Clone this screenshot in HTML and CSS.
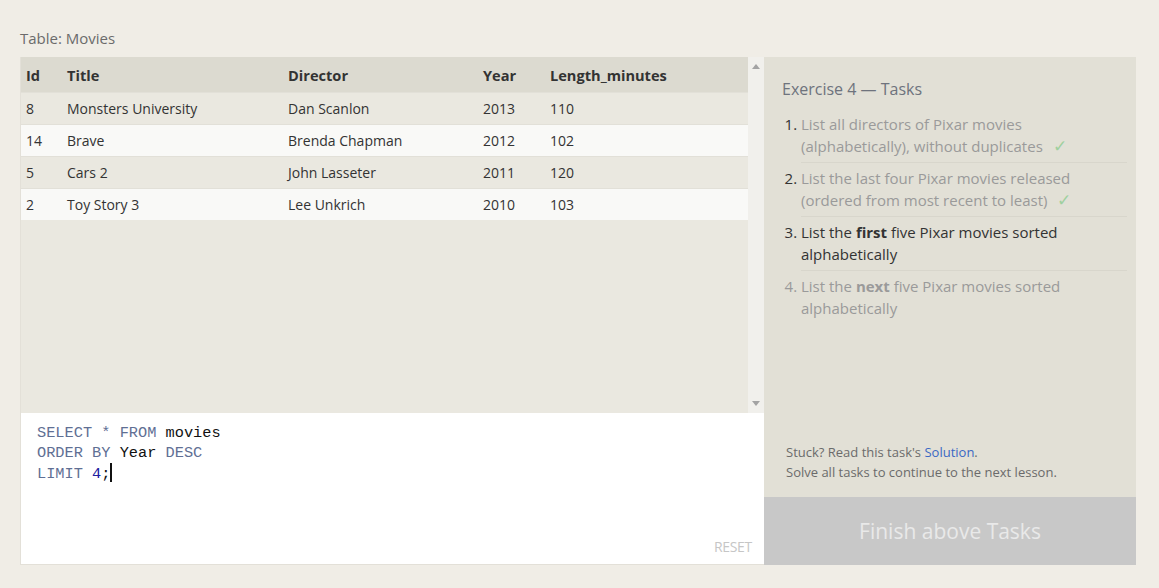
FILE: index.html
```html
<!DOCTYPE html>
<html>
<head>
<meta charset="utf-8">
<link rel="stylesheet" href="styles.css">
</head>
<body>
<div class="page">
  <div class="label">Table: Movies</div>
  <div class="frame">
    <div class="left">
      <div class="table-area">
        <div class="table-wrap">
          <table class="grid">
            <thead>
              <tr><th class="c-id">Id</th><th class="c-title">Title</th><th class="c-dir">Director</th><th class="c-year">Year</th><th class="c-len">Length_minutes</th></tr>
            </thead>
            <tbody>
              <tr class="odd"><td>8</td><td>Monsters University</td><td>Dan Scanlon</td><td>2013</td><td>110</td></tr>
              <tr class="even"><td>14</td><td>Brave</td><td>Brenda Chapman</td><td>2012</td><td>102</td></tr>
              <tr class="odd"><td>5</td><td>Cars 2</td><td>John Lasseter</td><td>2011</td><td>120</td></tr>
              <tr class="even"><td>2</td><td>Toy Story 3</td><td>Lee Unkrich</td><td>2010</td><td>103</td></tr>
            </tbody>
          </table>
        </div>
        <div class="scrollbar">
          <svg class="arrow" width="8" height="5" viewBox="0 0 8 5"><polygon points="4,0 8,5 0,5" fill="#a3a3a3"/></svg>
          <svg class="arrow" width="8" height="5" viewBox="0 0 8 5"><polygon points="0,0 8,0 4,5" fill="#a3a3a3"/></svg>
        </div>
      </div>
      <div class="editor">
        <div class="code">
          <div><span class="kw">SELECT</span> <span class="kw">*</span> <span class="kw">FROM</span> movies</div>
          <div><span class="kw">ORDER</span> <span class="kw">BY</span> Year <span class="kw">DESC</span></div>
          <div><span class="kw">LIMIT</span> <span class="num">4</span>;<span class="cursor"></span></div>
        </div>
        <div class="reset">RESET</div>
      </div>
    </div>
    <div class="right">
      <div class="tasks">
        <div class="ex-title">Exercise 4 — Tasks</div>
        <ol class="task-list">
          <li class="done">List all directors of Pixar movies (alphabetically), without duplicates <span class="check">✓</span></li>
          <li class="done">List the last four Pixar movies released (ordered from most recent to least) <span class="check">✓</span></li>
          <li class="active">List the <b>first</b> five Pixar movies sorted alphabetically</li>
          <li class="todo">List the <b>next</b> five Pixar movies sorted alphabetically</li>
        </ol>
      </div>
      <div class="help">
        <div>Stuck? Read this task's <a class="sol">Solution</a>.</div>
        <div>Solve all tasks to continue to the next lesson.</div>
      </div>
      <div class="finish">Finish above Tasks</div>
    </div>
  </div>
</div>
</body>
</html>
```

FILE: styles.css
```css
html, body {
  margin: 0;
  padding: 0;
  background: #f0ede6;
  font-family: "Open Sans", "Liberation Sans", sans-serif;
  color: #333;
}
.page {
  padding: 28px 0 0 20px;
}
.label {
  font-size: 15px;
  color: #6b6b6b;
  line-height: 21px;
  height: 21px;
  margin-bottom: 8px;
}
.frame {
  display: flex;
  width: 1116px;
  height: 508px;
}
.left {
  width: 744px;
  display: flex;
  flex-direction: column;
  border-left: 1px solid #e3e0d8;
  box-sizing: border-box;
}
.table-area {
  height: 356px;
  display: flex;
  background: #eae8e0;
}
.table-wrap {
  flex: 1;
}
.grid {
  width: 100%;
  border-collapse: collapse;
  font-size: 14px;
}
.grid th {
  background: #dcdad0;
  text-align: left;
  font-weight: 700;
  font-size: 14.6px;
  color: #333;
  height: 35px;
  padding: 1px 0 0 5px;
  box-sizing: border-box;
}
.grid td {
  height: 31px;
  padding: 0 0 0 5px;
  border-top: 1px solid #e2e0d8;
  color: #333;
}
.c-id { width: 41px; }
.c-title { width: 221px; }
.c-dir { width: 195px; }
.c-year { width: 67px; }
.odd td { background: #eae8e0; }
.even td { background: #f9f9f7; }
.scrollbar {
  width: 16px;
  background: #f1f0ec;
  display: flex;
  flex-direction: column;
  justify-content: space-between;
  align-items: center;
  padding: 7px 0 7px 0;
  box-sizing: border-box;
}
.editor {
  flex: 1;
  background: #fff;
  display: flex;
  flex-direction: column;
  padding: 10px 12px 8px 16px;
  border-bottom: 1px solid #e3e0d8;
}
.code {
  font-family: "Liberation Mono", "DejaVu Sans Mono", monospace;
  font-size: 15.3px;
  line-height: 20px;
  color: #111;
}
.kw { color: #5f6f94; }
.num { color: #2020a0; }
.cursor {
  display: inline-block;
  width: 2px;
  height: 19px;
  background: #111;
  vertical-align: -4px;
}
.reset {
  margin-top: auto;
  align-self: flex-end;
  font-size: 14px;
  color: #c6c6c6;
  letter-spacing: -0.3px;
}
.right {
  width: 372px;
  background: #e2e0d6;
  display: flex;
  flex-direction: column;
}
.tasks {
  padding: 20px 9px 0 18px;
  flex: 1;
}
.ex-title {
  font-size: 16px;
  color: #6e737d;
  line-height: 24px;
  margin-bottom: 12px;
}
.task-list {
  margin: 0;
  padding: 0 0 0 19px;
  font-size: 15px;
  line-height: 22px;
}
.task-list li {
  padding: 4px 0 5px 0;
  border-bottom: 1px solid #d8d6cc;
}
.task-list li:first-child { padding-top: 0; }
.task-list li:last-child { border-bottom: none; }
.task-list li::marker { color: #333; }
.done { color: #9a9a9a; }
.todo { color: #9a9a9a; }
.todo::marker { color: #9a9a9a !important; }
.active { color: #333; }
.check {
  color: #9fd09f;
  font-size: 17px;
  margin-left: 6px;
}
.help {
  padding: 0 0 15px 22px;
  font-size: 13px;
  line-height: 20px;
  color: #6b6b6b;
}
.sol { color: #3a68c4; }
.finish {
  height: 68px;
  background: #c8c8c8;
  color: #e9e9e9;
  font-size: 21px;
  display: flex;
  align-items: center;
  justify-content: center;
}
```
